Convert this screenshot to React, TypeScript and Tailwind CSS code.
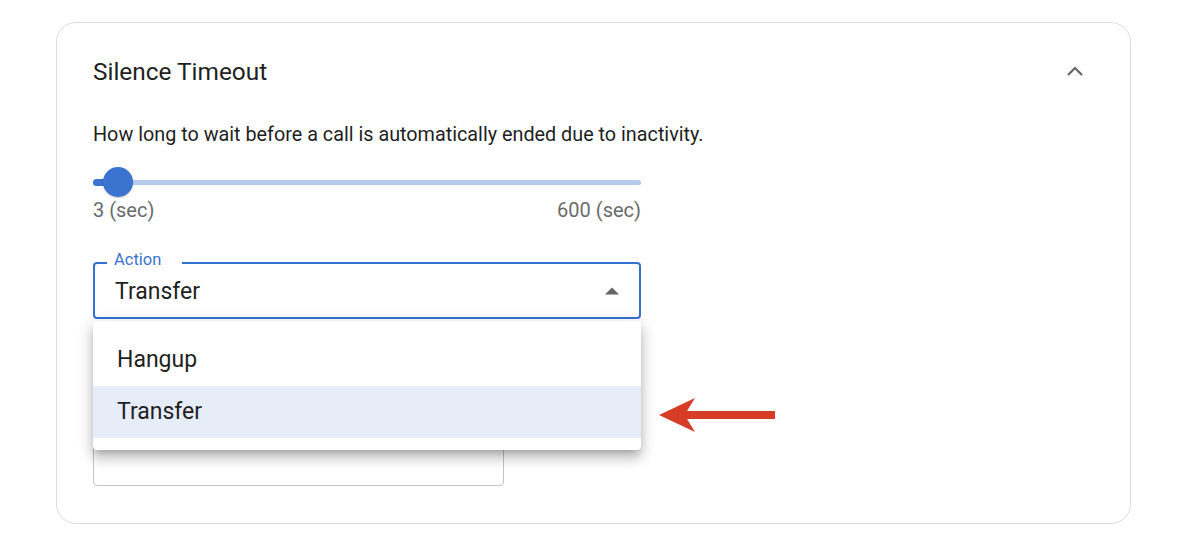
import { useState } from 'react';

const opcoes = ['Hangup', 'Transfer'];

export default function App() {
  const [acao] = useState('Transfer');

  return (
    <div className="w-[1178px] h-[548px] bg-white pt-[22px] pl-[56px] font-['Roboto',sans-serif] text-[#1f1f1f]">
      {/* Cartão Silence Timeout */}
      <div className="relative w-[1075px] h-[502px] rounded-[20px] border border-[#dcdcdc] pl-[36px] pr-[36px] pt-[34px]">
        <div className="flex items-center justify-between h-[30px]">
          <h2 className="text-[24.4px] leading-[30px] text-[#1f1f1f]">Silence Timeout</h2>
          <svg width="24" height="24" viewBox="0 0 24 24" className="mr-[7px]">
            <path d="M5 15 L12 8 L19 15" fill="none" stroke="#666" strokeWidth="2.2" />
          </svg>
        </div>

        <p className="mt-[36px] text-[19.8px] leading-[24px]">
          How long to wait before a call is automatically ended due to inactivity.
        </p>

        {/* Slider */}
        <div className="mt-[20px] w-[548px]">
          <div className="relative h-[30px] flex items-center">
            <div className="w-full h-[5px] rounded-full bg-[#b4cbee]" />
            <div className="absolute left-0 top-[12px] w-[26px] h-[7px] rounded-l-full bg-[#3a74d0]" />
            <div className="absolute left-[10px] top-0 w-[30px] h-[30px] rounded-full bg-[#3a74d0] shadow-[0_1px_2px_rgba(0,0,0,0.25)]" />
          </div>
          <div className="flex justify-between text-[20px] leading-[24px] text-[#6b6b6b] mt-[1px]">
            <span>3 (sec)</span>
            <span>600 (sec)</span>
          </div>
        </div>

        {/* Select Action */}
        <div className="relative mt-[40px] w-[548px]">
          <div className="h-[57px] rounded-[4px] border-2 border-[#3571d0] flex items-center justify-between pl-[20px] pr-[18px]">
            <span className="text-[23px] leading-[28px] pt-[2px]">{acao}</span>
            <svg width="16" height="8" viewBox="0 0 16 8" className="mr-[1px]">
              <path d="M1 7.5 L8 0.5 L15 7.5 Z" fill="#666" />
            </svg>
          </div>
          <span className="absolute left-[14px] top-[-12px] pl-[7px] pr-[21px] bg-white text-[16.5px] leading-[20px] text-[#3a74d0]">
            Action
          </span>

          {/* Menu aberto */}
          <div className="absolute left-0 top-[59px] w-[548px] bg-white rounded-[4px] pt-[13px] pb-[12px] z-10 shadow-[0_5px_6px_-3px_rgba(0,0,0,0.2),0_9px_12px_1px_rgba(0,0,0,0.14),0_3px_16px_2px_rgba(0,0,0,0.12)]">
            {opcoes.map((op) => (
              <div
                key={op}
                className={
                  op === acao
                    ? 'h-[52px] flex items-center pl-[24px] text-[23px] bg-[#e6ecf8]'
                    : 'h-[52px] flex items-center pl-[24px] text-[23px]'
                }
              >
                {op}
              </div>
            ))}
          </div>
        </div>

        {/* Campo abaixo (coberto pelo menu) */}
        <div className="mt-[110px] w-[411px] h-[57px] rounded-[4px] border border-[#c4c4c4]" />

        {/* Seta vermelha */}
        <svg
          width="120"
          height="40"
          viewBox="0 0 120 40"
          className="absolute left-[602px] top-[372px]"
        >
          <path d="M0 20 L36 3 L28 16 L116 16 L116 24 L28 24 L36 37 Z" fill="#d63c26" />
        </svg>
      </div>
    </div>
  );
}
